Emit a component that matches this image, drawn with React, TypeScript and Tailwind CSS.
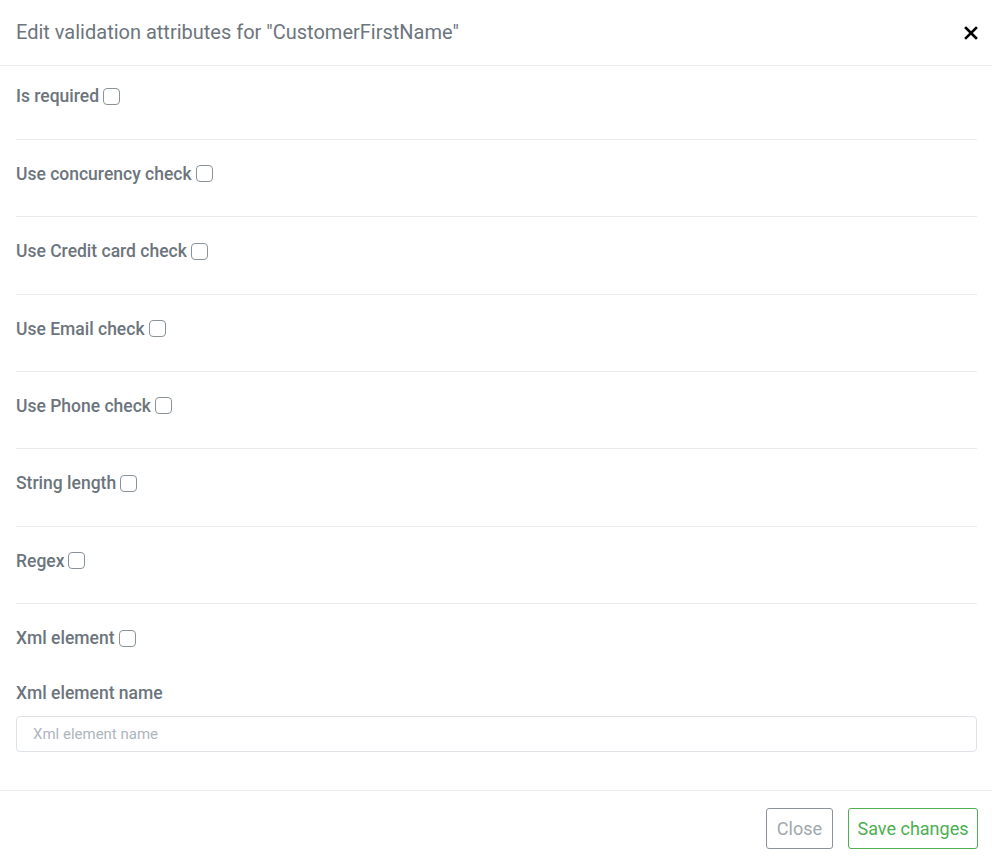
import React from 'react'

const checks = [
  'Is required',
  'Use concurency check',
  'Use Credit card check',
  'Use Email check',
  'Use Phone check',
  'String length',
  'Regex',
]

function CheckRow({ label }: { label: string }) {
  return (
    <label className="flex items-center h-6 text-[17.5px] font-medium text-[#6c757d] leading-6">
      <span>{label}</span>
      <input
        type="checkbox"
        className="ml-1 w-[17px] h-[17px] appearance-none border border-[#8a939b] rounded-[4px] bg-white"
      />
    </label>
  )
}

export default function App() {
  return (
    <div className="w-[992px] h-[867px] bg-white overflow-hidden font-['Roboto',sans-serif]">
      <div className="flex items-center justify-between h-[66px] pl-4 pr-[14px] border-b border-[#e9ecef]">
        <h5 className="text-[20px] text-[#6c757d] font-normal leading-none pb-[2px]">
          Edit validation attributes for "CustomerFirstName"
        </h5>
        <button className="text-black">
          <svg width="14" height="14" viewBox="0 0 14 14">
            <path d="M2 2 L12 12 M12 2 L2 12" stroke="black" strokeWidth="2.6" strokeLinecap="square" />
          </svg>
        </button>
      </div>

      <div className="pl-4 pr-[15px]">
        {checks.map((c, i) => (
          <div
            key={c}
            className={`border-b border-[#e9ecef] pb-[30.4px] ${i === 0 ? 'pt-[18.4px]' : 'pt-[22px]'}`}
          >
            <CheckRow label={c} />
          </div>
        ))}
        <div className="pt-[22px]">
          <CheckRow label="Xml element" />
        </div>
        <div className="mt-[31px] text-[17.5px] font-medium text-[#6c757d] leading-6">Xml element name</div>
        <input
          placeholder="Xml element name"
          className="mt-[11px] w-full h-[36px] px-4 border border-[#dee2e6] rounded-[4px] text-[15px] text-[#495057] placeholder:text-[#adb5bd] outline-none"
        />
      </div>

      <div className="mt-[38px] border-t border-[#e9ecef] flex justify-end gap-[15px] pt-[17px] pr-[14px]">
        <button className="h-[41px] px-[10px] border border-[#8a939b] rounded-[3px] text-[18px] text-[#a0a8b0]">
          Close
        </button>
        <button className="h-[41px] px-[8.5px] border border-[#4caf50] rounded-[3px] text-[18px] text-[#4caf50]">
          Save changes
        </button>
      </div>
    </div>
  )
}
